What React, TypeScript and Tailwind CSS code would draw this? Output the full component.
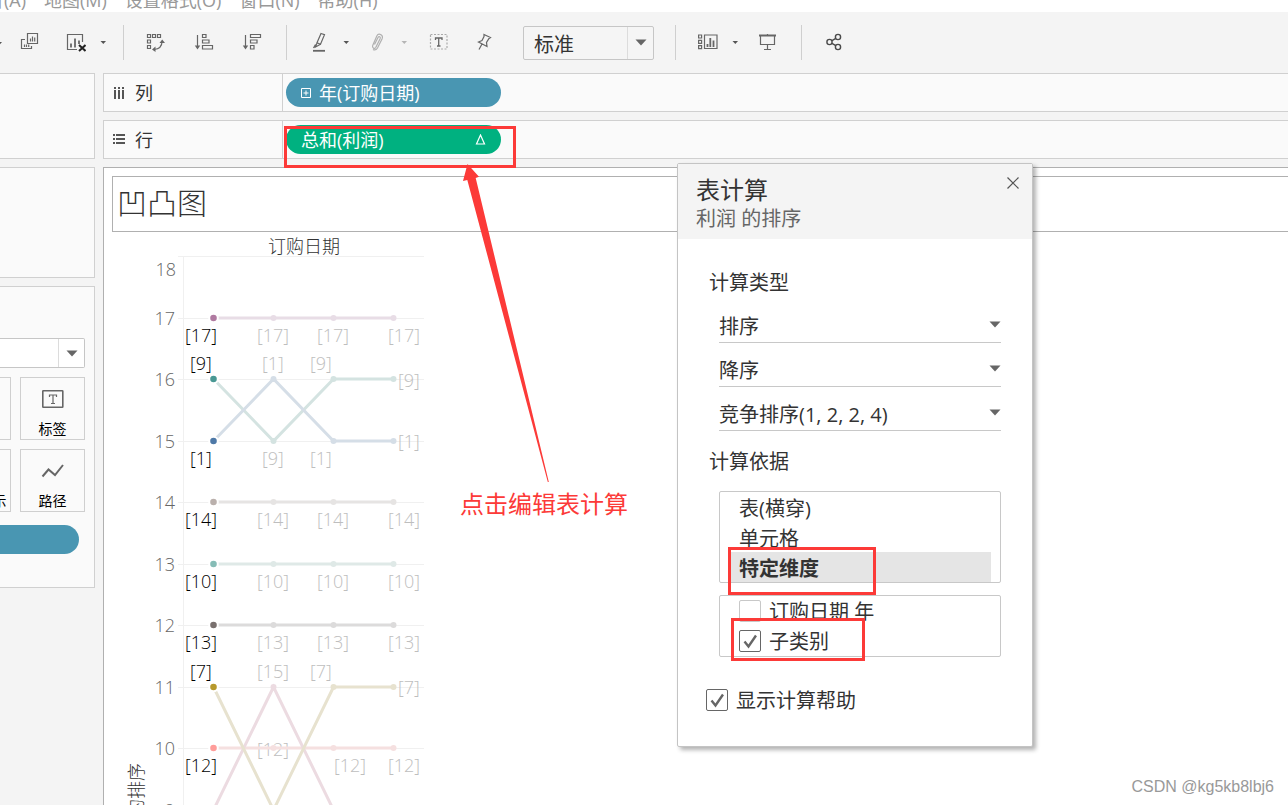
import React, { useState } from "react";
import clsx from "clsx";

interface Mark {
  x: number;
  y: number;
  text: string;
}

interface Series {
  rank: string;
  color: string;
  faded: string;
  points: number[];
}

const menuItems = ["分析(A)", "地图(M)", "设置格式(O)", "窗口(N)", "帮助(H)"];

// x positions of the four years, y positions of the rank rows
const years = [213, 273, 333, 393];
const rows: Record<number, number> = {
  17: 318,
  16: 379,
  15: 441,
  14: 502,
  13: 564,
  12: 625,
  11: 687,
  10: 748,
  9: 810,
};

const series: Series[] = [
  { rank: "17", color: "#b07aa1", faded: "#e8dde6", points: [17, 17, 17, 17] },
  { rank: "9", color: "#499894", faded: "#d4e3e1", points: [16, 15, 16, 16] },
  { rank: "1", color: "#4e79a7", faded: "#d5dee7", points: [15, 16, 15, 15] },
  { rank: "14", color: "#bab0ac", faded: "#e6e4e3", points: [14, 14, 14, 14] },
  { rank: "10", color: "#86bcb6", faded: "#dfe9e7", points: [13, 13, 13, 13] },
  { rank: "13", color: "#79706e", faded: "#dcdbdb", points: [12, 12, 12, 12] },
  { rank: "12", color: "#ff9d9a", faded: "#f5e0e0", points: [10, 10, 10, 10] },
  { rank: "15", color: "#d37295", faded: "#ecdbe1", points: [9, 11, 9, 9] },
  { rank: "7", color: "#b6992d", faded: "#e7e2cf", points: [11, 9, 11, 11] },
];

const activeMarks: Mark[] = [
  { x: 201, y: 342, text: "[17]" },
  { x: 201, y: 370, text: "[9]" },
  { x: 201, y: 465, text: "[1]" },
  { x: 201, y: 526, text: "[14]" },
  { x: 201, y: 588, text: "[10]" },
  { x: 201, y: 649, text: "[13]" },
  { x: 201, y: 678, text: "[7]" },
  { x: 201, y: 772, text: "[12]" },
];

const fadedMarks: Mark[] = [
  { x: 273, y: 342, text: "[17]" },
  { x: 333, y: 342, text: "[17]" },
  { x: 404, y: 342, text: "[17]" },
  { x: 273, y: 370, text: "[1]" },
  { x: 321, y: 370, text: "[9]" },
  { x: 409, y: 387, text: "[9]" },
  { x: 273, y: 465, text: "[9]" },
  { x: 321, y: 465, text: "[1]" },
  { x: 409, y: 448, text: "[1]" },
  { x: 273, y: 526, text: "[14]" },
  { x: 333, y: 526, text: "[14]" },
  { x: 404, y: 526, text: "[14]" },
  { x: 273, y: 588, text: "[10]" },
  { x: 333, y: 588, text: "[10]" },
  { x: 404, y: 588, text: "[10]" },
  { x: 273, y: 649, text: "[13]" },
  { x: 333, y: 649, text: "[13]" },
  { x: 404, y: 649, text: "[13]" },
  { x: 273, y: 678, text: "[15]" },
  { x: 321, y: 678, text: "[7]" },
  { x: 409, y: 694, text: "[7]" },
  { x: 273, y: 756, text: "[12]" },
  { x: 350, y: 772, text: "[12]" },
  { x: 404, y: 772, text: "[12]" },
];

const Triangle: React.FC<{ className?: string }> = ({ className }) => (
  <svg viewBox="0 0 12 7" className={clsx("w-3 h-[7px]", className)} fill="#666">
    <path d="M0.5 0.5h11L6 6.5z" />
  </svg>
);

const SmallCaret: React.FC<{ muted?: boolean }> = ({ muted }) => (
  <svg viewBox="0 0 10 20" className="w-2.5 h-5 shrink-0" fill={muted ? "#b5b5b5" : "#555"}>
    <path d="M2.5 9h5.5L5.3 12z" />
  </svg>
);

const Tool: React.FC<{ label: string; caret?: boolean; muted?: boolean; children: React.ReactNode }> = ({
  label,
  caret,
  muted,
  children,
}) => (
  <button type="button" aria-label={label} className="flex items-center gap-3 pb-0.5 shrink-0">
    <svg
      viewBox="0 0 20 20"
      className="w-5 h-5 shrink-0"
      fill="none"
      stroke={muted ? "#b0b0b0" : "#666"}
      strokeWidth="1.2"
    >
      {children}
    </svg>
    {caret && <SmallCaret muted={muted} />}
  </button>
);

const Separator = () => <div className="w-px h-[35px] bg-[#cfcfcf] shrink-0" />;

const Toolbar = () => (
  <div className="h-[61px] flex items-center shrink-0">
    <div className="flex items-center gap-6 pr-[15px] -ml-1.5">
      <SmallCaret />
      <div className="flex items-center gap-[26px] -ml-2">
        <Tool label="复制">
          <path d="M7.5 1.5h10v10h-10zM5 7.5H1.5v9h10V14M10.5 9.5v-3M12.5 9.5v-5M14.7 9.5V5.5M4.5 15v-2.5M6.5 15v-2.5M8.7 15v-2.5" />
        </Tool>
        <Tool label="清除" caret>
          <path d="M11 17.5H1.5v-15h15V10" />
          <path d="M5 15.5v-4M9 15.5v-9M13 12V8.5" strokeWidth="1.8" />
          <path d="M13 13l6.5 6M19.5 13L13 19" stroke="#222" strokeWidth="2" />
        </Tool>
      </div>
    </div>
    <Separator />
    <div className="flex items-center gap-7 pl-[22px] pr-6">
      <Tool label="交换行和列">
        <path d="M1.5 2.5h3v3h-3zM6.5 2.5h3v3h-3zM11.5 2.5h3v3h-3zM1.5 8h3v3h-3zM1.5 13.5h3v3h-3z" />
        <path d="M16 9.500c0 5-3 7.500-8 8" />
        <path d="M13.500 11l2.700-3.500L19 11zM9.500 14.500l-3.500 3 3.500 2.500z" fill="#666" stroke="none" />
      </Tool>
      <Tool label="升序">
        <path d="M3.5 3v13M8.5 2.5h3.5v3H8.5zM8.5 8h6.5v3H8.5zM8.5 13.5h10v3.500h-10z" />
        <path d="M.8 13.500h5.400L3.500 17.500z" fill="#666" stroke="none" />
      </Tool>
      <Tool label="降序">
        <path d="M3.5 3v13M8.5 2.5h10v3h-10zM8.5 8h6.5v3H8.5zM8.5 13.5h3.500v3.500H8.500z" />
        <path d="M.8 13.500h5.400L3.500 17.500z" fill="#666" stroke="none" />
      </Tool>
    </div>
    <Separator />
    <div className="flex items-center gap-4 pl-[22px] shrink-0">
      <Tool label="突出显示" caret>
        <path d="M12 1.500l3.500 1.200-4 9.500-3.500-1.500zM8 10.700L6.500 15l5-2.800M6.500 12.500L4.500 16" />
        <path d="M4 18.800h12" strokeWidth="1.800" />
      </Tool>
      <Tool label="组成员" caret muted>
        <path d="M7.500 12.500l3.500-7c1-1.600 2.800-.6 2.200 1l-4.300 8.700c-1.300 2.300-4.200.8-3.200-1.700L9.800 4c1.700-3.400 7-1.300 5.200 3l-4.500 9c-1.200 2-3 2.300-4.500 1.500" />
      </Tool>
    </div>
    <div className="flex items-center gap-6 pl-5 pr-[30px]">
      <Tool label="显示标记标签">
        <rect x="1.5" y="2.5" width="16.5" height="14.5" stroke="#aaa" strokeDasharray="2 1.5" />
        <path d="M6.5 8V6h6.500v2M9.700 6v8M8 14h3.500" strokeWidth="1.300" />
      </Tool>
      <Tool label="固定">
        <path d="M11 2.500l6.500 3-1.500 1-2.500 4 .5 4-8.500-4.500 3.500-1.500 2-4zM9 12L6 17.500" />
      </Tool>
    </div>
    <div className="relative w-[131px] h-[34px] shrink-0 border border-[#c6c6c6] rounded-xs bg-[#f5f5f5] mr-[21px]">
      <select
        aria-label="视图大小"
        className="appearance-none w-full h-full pt-1 pl-2.5 pr-7 text-[20px] leading-7 text-[#333] outline-none"
      >
        <option>标准</option>
        <option>整个视图</option>
      </select>
      <div className="pointer-events-none absolute inset-y-0 right-0 w-[26px] border-l border-[#dcdcdc] flex items-center justify-center">
        <Triangle />
      </div>
    </div>
    <Separator />
    <div className="flex items-center gap-[17px] pl-[22px] pr-6">
      <Tool label="智能显示" caret>
        <path d="M.6 3h3v3h-3zM.6 8.300h3v3h-3zM.6 13.600h3v3h-3zM6.500 3h12.500v13.500H6.500z" />
        <path d="M9.500 15v-3M12.300 15V6M15.500 15V8.500" strokeWidth="1.800" />
      </Tool>
      <Tool label="演示模式">
        <path d="M2 3.500h17" strokeWidth="2" />
        <path d="M3.500 4v8.500h14V4M10.500 2v1M10.500 12.500V17M7 17.500h7" />
      </Tool>
    </div>
    <Separator />
    <div className="pl-[22px]">
      <Tool label="共享">
        <g stroke="#4a4a4a" strokeWidth="1.400">
          <circle cx="5.500" cy="10" r="2.600" />
          <circle cx="14" cy="5" r="2.600" />
          <circle cx="14" cy="15" r="2.600" />
          <path d="M8 8.700l3.800-2.300M8 11.300l3.800 2.300" />
        </g>
      </Tool>
    </div>
  </div>
);

const MarkTile: React.FC<{ label: string; children?: React.ReactNode }> = ({ label, children }) => (
  <button
    type="button"
    className="w-[65px] h-[63px] border border-[#cfcfcf] flex flex-col items-center justify-end text-sm leading-5 text-black whitespace-nowrap"
  >
    <svg viewBox="0 0 24 20" className="w-6 h-5 mb-2.5" fill="none" stroke="#666" strokeWidth="1.6">
      {children}
    </svg>
    <span>{label}</span>
  </button>
);

const Sidebar = () => (
  <aside className="w-[95px] shrink-0 flex flex-col gap-2">
    <div className="h-[86px] border border-l-0 border-[#d0d0d0] bg-[#fafafa]" />
    <div className="h-[111px] border border-l-0 border-[#d0d0d0] bg-[#fafafa]" />
    <div className="h-[302px] border border-l-0 border-[#d0d0d0] bg-[#fafafa] pt-[51px] pr-[9px] overflow-hidden flex flex-col gap-[9px]">
      <div className="relative h-[30px] border border-l-0 border-[#c6c6c6] rounded-r-xs bg-white">
        <select aria-label="标记类型" className="appearance-none w-full h-full outline-none">
          <option></option>
          <option>线</option>
        </select>
        <div className="pointer-events-none absolute inset-y-0 right-0 w-[26px] border-l border-[#dcdcdc] flex items-center justify-center">
          <Triangle />
        </div>
      </div>
      <div className="grid grid-cols-[65px_65px] gap-[9px] justify-end">
        <MarkTile label="大小" />
        <MarkTile label="标签">
          <rect x="1.8" y="1.8" width="20" height="16.5" rx="0.5" />
          <path d="M8.500 8V6h7v2M12 6v8.500M10 14.500h4" strokeWidth="1.200" />
        </MarkTile>
        <MarkTile label="工具提示" />
        <MarkTile label="路径">
          <path d="M1.500 15.500l6-7 6.500 5.500 8-10" strokeWidth="2" />
        </MarkTile>
      </div>
      <button type="button" aria-label="子类别" className="h-[29px] mt-1 mr-1.5 shrink-0 rounded-r-full bg-[#4996b2]" />
    </div>
  </aside>
);

const Shelf: React.FC<{ name: string; icon: React.ReactNode; children: React.ReactNode }> = ({
  name,
  icon,
  children,
}) => (
  <div className="h-[39px] shrink-0 border border-r-0 border-[#d0d0d0] bg-[#fafafa] flex items-center">
    <div className="w-[179px] h-full border-r border-[#d0d0d0] flex items-center gap-[9px] pl-2 text-lg leading-6 text-[#333]">
      <svg viewBox="0 0 14 14" className="w-3.5 h-3.5" fill="#555">
        {icon}
      </svg>
      {name}
    </div>
    <div className="pl-[3px]">{children}</div>
  </div>
);

const BumpChart = () => (
  <svg
    viewBox="112 232 320 580"
    className="w-[320px] h-[580px] shrink-0 block font-['Open_Sans','Noto_Sans_CJK_SC',sans-serif] font-light"
    fontSize="18"
    aria-label="凹凸图"
  >
    <text x="304" y="253" textAnchor="middle" fill="#333">
      订购日期
    </text>
    {/* Grid */}
    <g stroke="#f0f0f0" shapeRendering="crispEdges">
      <path d="M178 256.5h246M183.5 256v556" />
      {Object.values(rows).map((y) => (
        <path key={y} d={`M178 ${y + 0.5}h246`} />
      ))}
    </g>
    <g fill="#666" textAnchor="end">
      <text x="176" y="276">
        18
      </text>
      {Object.entries(rows).map(([rank, y]) => (
        <text key={rank} x="175" y={y + 7}>
          {rank}
        </text>
      ))}
    </g>
    <text transform="translate(143 763) rotate(-90)" textAnchor="end" fill="#333">
      利润 的排序
    </text>
    <g fill="#bebebe" textAnchor="middle">
      {fadedMarks.map((mark) => (
        <text key={`${mark.x}-${mark.y}`} x={mark.x} y={mark.y}>
          {mark.text}
        </text>
      ))}
    </g>
    {/* Lines */}
    {series.map((item) => (
      <g key={item.rank} fill={item.faded}>
        <polyline
          points={item.points.map((rank, i) => `${years[i] + 0.5},${rows[rank]}`).join(" ")}
          fill="none"
          stroke={item.faded}
          strokeWidth="3"
        />
        {item.points.map((rank, i) => (
          <circle key={i} cx={years[i] + 0.5} cy={rows[rank]} r="3" />
        ))}
      </g>
    ))}
    {/* First year stays highlighted */}
    {series.map((item) => (
      <circle
        key={item.rank}
        cx={years[0] + 0.5}
        cy={rows[item.points[0]]}
        r="4.3"
        fill={item.color}
        stroke="#fff"
        strokeWidth="2"
      />
    ))}
    <g fill="#000" textAnchor="middle">
      {activeMarks.map((mark) => (
        <text key={mark.y} x={mark.x} y={mark.y}>
          {mark.text}
        </text>
      ))}
    </g>
  </svg>
);

const LineSelect: React.FC<{ label: string; options: string[] }> = ({ label, options }) => (
  <div className="relative h-11 border-b border-[#c8c8c8] flex items-end">
    <select
      aria-label={label}
      className="appearance-none w-full h-[30px] pr-6 text-[20px] leading-[30px] text-[#333] outline-none"
    >
      {options.map((option) => (
        <option key={option}>{option}</option>
      ))}
    </select>
    <Triangle className="pointer-events-none absolute right-0 bottom-3.5" />
  </div>
);

const CheckRow: React.FC<{ label: string; checked: boolean; onChange: () => void }> = ({
  label,
  checked,
  onChange,
}) => (
  <label className="h-[30px] flex items-center gap-2 leading-8 whitespace-nowrap">
    <span className="relative w-[22px] h-[22px]">
      <input
        type="checkbox"
        checked={checked}
        onChange={onChange}
        className="appearance-none block w-full h-full rounded-xs border border-[#c8c8c8] checked:border-[#666] bg-white"
      />
      {checked && (
        <svg
          viewBox="0 0 22 22"
          className="pointer-events-none absolute inset-0"
          fill="none"
          stroke="#666"
          strokeWidth="2.4"
        >
          <path d="M5.500 11.500l4 5L17 5.500" />
        </svg>
      )}
    </span>
    <span className="pt-0.5">{label}</span>
  </label>
);

const TableCalcDialog = () => {
  const [scope, setScope] = useState("特定维度");
  const [byYear, setByYear] = useState(false);
  const [byCategory, setByCategory] = useState(true);
  const [showHelp, setShowHelp] = useState(true);

  return (
    <div
      role="dialog"
      aria-label="表计算"
      className="absolute left-[677px] top-[163px] w-[356px] h-[584px] border border-[#c4c4c4] rounded-xs bg-white shadow-[3px_3px_4px_rgba(0,0,0,0.3)] text-[20px] leading-[30px] text-[#333]"
    >
      <div className="h-[75px] bg-[#f4f4f4] pl-[18px] pt-[11px] relative">
        <h2 className="text-2xl leading-[30px]">表计算</h2>
        <p className="leading-7 text-[#666]">利润 的排序</p>
        <button type="button" aria-label="关闭" className="absolute right-3 top-3">
          <svg viewBox="0 0 14 14" className="w-3.5 h-3.5" stroke="#555" strokeWidth="1.2">
            <path d="M1.500 1.500l11 11M12.500 1.500l-11 11" />
          </svg>
        </button>
      </div>
      <div className="pt-[29px] pl-[31px] pr-[31px]">
        <h3>计算类型</h3>
        <div className="ml-2.5 mt-px">
          <LineSelect label="计算类型" options={["排序", "差异"]} />
          <LineSelect label="顺序" options={["降序", "升序"]} />
          <LineSelect label="排序方式" options={["竞争排序(1, 2, 2, 4)", "密集(1, 2, 2, 3)"]} />
        </div>
        <h3 className="mt-4">计算依据</h3>
        <div className="ml-2.5 mt-3.5 h-[92px] border border-[#c8c8c8] rounded-xs px-[9px] flex flex-col">
          {["表(横穿)", "单元格", "特定维度"].map((item) => (
            <button
              key={item}
              type="button"
              onClick={() => setScope(item)}
              className={clsx(
                "h-[30px] pl-2.5 pt-0.5 text-left",
                scope === item && "bg-[#e5e5e5] font-bold"
              )}
            >
              {item}
            </button>
          ))}
        </div>
        <div className="ml-2.5 mt-3 h-[62px] border border-[#c8c8c8] rounded-xs pl-[19px]">
          <CheckRow label="订购日期 年" checked={byYear} onChange={() => setByYear(!byYear)} />
          <CheckRow label="子类别" checked={byCategory} onChange={() => setByCategory(!byCategory)} />
        </div>
      </div>
      <div className="pt-7 pl-7">
        <CheckRow label="显示计算帮助" checked={showHelp} onChange={() => setShowHelp(!showHelp)} />
      </div>
    </div>
  );
};

// Red callouts drawn over the workspace
const Callouts = () => (
  <div className="pointer-events-none">
    <div className="absolute left-[284px] top-[126px] w-[232px] h-[42px] border-3 border-[#fc3a38]" />
    <div className="absolute left-[728px] top-[547px] w-[148px] h-12 border-3 border-[#fc3a38]" />
    <div className="absolute left-[731px] top-[618px] w-[134px] h-[43px] border-3 border-[#fc3a38]" />
    <svg viewBox="460 160 100 330" className="absolute left-[460px] top-[160px] w-[100px] h-[330px]" fill="#fc3a38">
      <path d="M467.500 164L463 181l4.300-1L547.800 482h1L475.700 178l3.300-1.300z" />
    </svg>
    <p className="absolute left-[460px] top-[488px] text-2xl leading-8 text-[#fc3a38] whitespace-nowrap">
      点击编辑表计算
    </p>
  </div>
);

const App: React.FC = () => {
  return (
    <div className="relative h-screen overflow-hidden flex flex-col bg-[#f4f4f4] font-['Open_Sans','Noto_Sans_CJK_SC',sans-serif] text-[#333]">
      {/* Menu */}
      <nav className="h-3 shrink-0 bg-white overflow-hidden flex items-end gap-[18px] -ml-8 text-lg leading-6 text-[#999] whitespace-nowrap">
        {menuItems.map((item) => (
          <button key={item} type="button">
            {item}
          </button>
        ))}
      </nav>
      <Toolbar />
      <div className="flex-1 min-h-0 flex gap-2">
        <Sidebar />
        <main className="flex-1 min-w-0 flex flex-col gap-2">
          <Shelf
            name="列"
            icon={<path d="M2 1h2v2H2zM6 1h2v2H6zM10 1h2v2h-2zM2 4h2v9H2zM6 4h2v9H6zM10 4h2v9h-2z" />}
          >
            <button
              type="button"
              className="w-[215px] h-[29px] rounded-full bg-[#4996b2] text-white text-lg leading-6 flex items-center gap-2 px-[15px]"
            >
              <svg viewBox="0 0 10 10" className="w-2.5 h-2.5" fill="none" stroke="#fff">
                <path d="M.5.5h9v9h-9zM5 2.500v5M2.500 5h5" />
              </svg>
              年(订购日期)
            </button>
          </Shelf>
          <Shelf
            name="行"
            icon={<path d="M1 1h2v2H1zM4 1h9v2H4zM1 5h2v2H1zM4 5h9v2H4zM1 9h2v2H1zM4 9h9v2H4z" />}
          >
            <button
              type="button"
              className="w-[215px] h-[29px] rounded-full bg-[#00b180] text-white text-lg leading-6 flex items-center justify-between px-[15px]"
            >
              总和(利润)
              <svg viewBox="0 0 11 11" className="w-[11px] h-[11px]" fill="none" stroke="#fff" strokeWidth="1.2">
                <path d="M5.500 1L9.500 10h-8z" />
              </svg>
            </button>
          </Shelf>
          <section className="flex-1 min-h-0 overflow-hidden border border-r-0 border-b-0 border-[#b0b0b0] bg-white pl-2 pt-2">
            <h1 className="h-14 border border-r-0 border-[#b0b0b0] pl-1 text-3xl leading-[52px] font-light">
              凹凸图
            </h1>
            <BumpChart />
          </section>
        </main>
      </div>
      <TableCalcDialog />
      <Callouts />
      <p className="absolute right-3.5 bottom-1.5 text-base leading-6 text-[#999] font-['Liberation_Sans',sans-serif]">
        CSDN @kg5kb8lbj6
      </p>
    </div>
  );
};

export default App;
